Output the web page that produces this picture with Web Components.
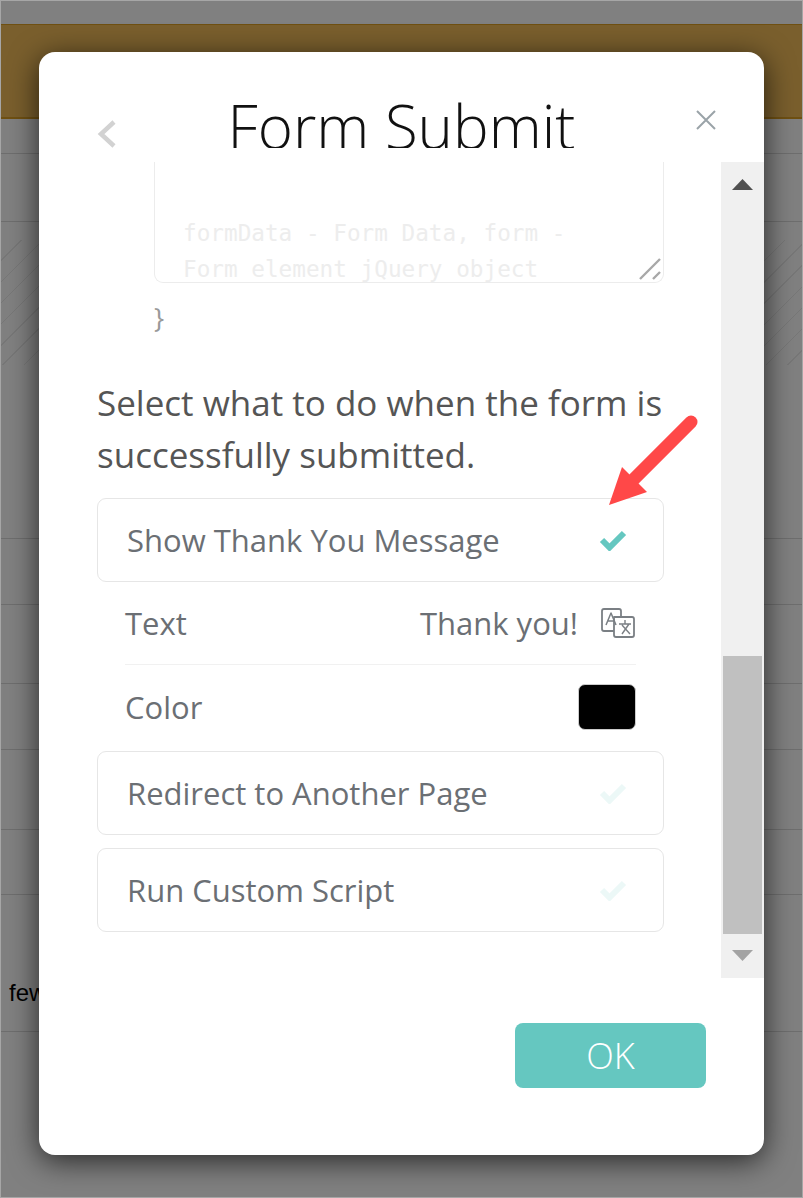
<!DOCTYPE html>
<html>
<head>
<meta charset="utf-8">
<title>Form Submit</title>
<style>
    html, body { margin: 0; padding: 0; height: 100%; overflow: hidden; background: #808080; }
    body { font-family: "Open Sans", "Liberation Sans", sans-serif; }
</style>
</head>
<body>
<page-backdrop></page-backdrop>
<form-modal heading="Form Submit">
    <code-box></code-box>
    <p-title>Select what to do when the form is successfully submitted.</p-title>
    <option-row active>Show Thank You Message</option-row>
    <setting-row label="Text" divider>
        Thank you!
        <translate-icon></translate-icon>
    </setting-row>
    <setting-row label="Color"><color-swatch></color-swatch></setting-row>
    <option-row style="margin-top: 3px">Redirect to Another Page</option-row>
    <option-row style="margin-top: 13px">Run Custom Script</option-row>
</form-modal>
<red-arrow></red-arrow>

<script>
function define(name, html, cls) {
    customElements.define(name, class extends (cls || HTMLElement) {
        constructor() {
            super();
            const template = document.createElement('template');
            template.innerHTML = typeof html === 'function' ? html(this) : html;
            this.attachShadow({ mode: 'open' }).appendChild(template.content.cloneNode(true));
        }
    });
}

// dimmed page behind the dialog
define('page-backdrop', `
    <style>
        :host { display: block; box-sizing: border-box; height: 1198px; border: 1px solid #a6a6a6; background: #808080; overflow: hidden; }
        .top { height: 23px; }
        .banner { height: 92px; background: #7a5f2d; border-top: 1px solid #6f5012; border-bottom: 2px solid #6f5012; }
        .row { border-bottom: 1px solid #6e6e6e; box-sizing: border-box; }
        .hatch {
            height: 125px; margin-top: 18px;
            background: repeating-linear-gradient(135deg, #808080 0 14px, #777 14px 15px);
        }
        .few { display: flex; align-items: center; padding-left: 8px; font: 24px "Liberation Sans", Arial, sans-serif; color: #000; }
    </style>
    <div class="top"></div>
    <div class="banner"></div>
    <div class="row" style="height: 35px"></div>
    <div class="row" style="height: 68px"></div>
    <div class="hatch"></div>
    <div class="row" style="height: 174px"></div>
    <div class="row" style="height: 66px"></div>
    <div class="row" style="height: 79px"></div>
    <div class="row" style="height: 66px"></div>
    <div class="row" style="height: 80px"></div>
    <div class="row" style="height: 65px"></div>
    <div class="row few" style="height: 137px; padding-top: 60px">few</div>
`);

define('form-modal', el => `
    <style>
        :host {
            position: absolute; left: 39px; top: 52px; width: 725px; height: 1103px;
            display: flex; flex-direction: column; background: #fff; border-radius: 16px;
            box-shadow: 0 6px 30px rgba(0, 0, 0, .7);
        }
        header { position: relative; height: 110px; flex: none; }
        h1 {
            margin: 0; position: absolute; left: 0; right: 0; top: 32px; text-align: center;
            font: 300 60px/84px "Open Sans", sans-serif; color: #111; height: 64px; overflow: hidden;
        }
        .back { position: absolute; left: 58px; top: 67px; }
        .close { position: absolute; left: 656px; top: 57px; }
        .body { display: flex; height: 816px; flex: none; }
        .content { flex: 1; overflow: hidden; padding-left: 58px; padding-right: 57px; }
        footer { flex: 1; display: flex; justify-content: flex-end; align-items: flex-start; padding: 45px 58px 0 0; }
    </style>
    <header>
        <h1>${el.getAttribute('heading')}</h1>
        <svg class="back" width="20" height="30" viewBox="0 0 20 30"><path d="M17 3 L4 15 L17 27" fill="none" stroke="#d2d2d2" stroke-width="4.5"/></svg>
        <svg class="close" width="22" height="22" viewBox="0 0 22 22"><path d="M2 2 L20 20 M20 2 L2 20" fill="none" stroke="#9aa3a8" stroke-width="2"/></svg>
    </header>
    <div class="body">
        <div class="content"><slot></slot></div>
        <scroll-bar></scroll-bar>
    </div>
    <footer><ok-button>OK</ok-button></footer>
`);

define('code-box', `
    <style>
        :host { display: block; margin-left: 57px; }
        .box {
            box-sizing: border-box; height: 121px; overflow: hidden; border: 1px solid #ececec; border-top: 0;
            border-radius: 0 0 9px 9px; position: relative; padding-left: 28px;
            font: 22.7px/36px "DejaVu Sans Mono", monospace; color: #ededed; white-space: pre;
        }
        .text { margin-top: -19px; }
        svg { position: absolute; right: 1px; bottom: 1px; }
        .brace { margin-top: 17px; font: 27px/36px "Open Sans", sans-serif; color: #999; }
    </style>
    <div class="box">
        <div class="text">formData - Form Data, form -
Form element jQuery object</div>
        <svg width="24" height="24" viewBox="0 0 24 24"><path d="M2 22 L22 2 M15 22 L22 15" fill="none" stroke="#a8a8a8" stroke-width="2.4"/></svg>
    </div>
    <div class="brace">}</div>
`);

define('p-title', `
    <style>
        :host { display: block; margin: 41px 0 17px; font: 35px/52px "Open Sans", sans-serif; color: #555; }
    </style>
    <slot></slot>
`);

define('check-mark', `
    <style>
        :host { display: block; width: 28px; height: 22px; }
        svg { display: block; }
    </style>
    <svg width="28" height="22" viewBox="0 0 28 22"><path d="M3 11 L10.500 18.500 L25 4" fill="none" stroke="currentColor" stroke-width="6"/></svg>
`);

define('option-row', el => `
    <style>
        :host {
            display: flex; align-items: center; justify-content: space-between; box-sizing: border-box; height: 84px;
            padding: 0 36px 0 29px; border: 1px solid #e6e6e6; border-radius: 9px;
            font: 31px/42px "Open Sans", sans-serif; color: #6b6f74;
        }
        .on { color: #65c7c0; }
        .off { color: #ecf8f7; }
    </style>
    <slot></slot>
    <check-mark class="${el.hasAttribute('active') ? 'on' : 'off'}"></check-mark>
`);

define('setting-row', el => `
    <style>
        :host { display: block; padding: 0 28px 0 28px; }
        .row {
            display: flex; align-items: center; justify-content: space-between; box-sizing: border-box; height: 83px;
            font: 31px/42px "Open Sans", sans-serif; color: #6b6f74;
            ${el.hasAttribute('divider') ? 'border-bottom: 1px solid #f1f1f1;' : ''}
        }
        .val { display: flex; align-items: center; gap: 22px; }
    </style>
    <div class="row"><span>${el.getAttribute('label')}</span><span class="val"><slot></slot></span></div>
`);

define('translate-icon', `
    <style>
        :host { display: block; width: 36px; height: 32px; }
        svg { display: block; }
        text { font-family: "Open Sans", sans-serif; fill: #6b6f74; }
    </style>
    <svg width="36" height="32" viewBox="0 0 36 32" fill="none" stroke="#7a7f84" stroke-width="1.8" stroke-linejoin="round">
        <path d="M14 24 H4 Q2 24 2 22 V4 Q2 2 4 2 H19 Q21 2 21 4 V9"/>
        <path d="M14 10 H32 Q34 10 34 12 V28 Q34 30 32 30 H16 Q14 30 14 28 Z"/>
        <path d="M6 18 L11 6 L16 18 M8 14 H14" stroke-width="1.5"/>
        <path d="M19 17 H31 M25 13 V17 M22 27 L29 17 M22 18 L30 27" stroke-width="1.4"/>
    </svg>
`);

define('color-swatch', `
    <style>
        :host { display: block; box-sizing: border-box; width: 58px; height: 46px; background: #000; border: 1px solid #ccc; border-radius: 7px; }
    </style>
`);

define('scroll-bar', `
    <style>
        :host { display: flex; flex-direction: column; width: 43px; flex: none; background: #f0f0f0; box-sizing: border-box; padding: 0 2px; }
        .btn { display: flex; justify-content: center; flex: none; }
        .up { height: 494px; padding-top: 17px; box-sizing: border-box; }
        .thumb { height: 278px; background: #c0c0c0; }
        .down { padding-top: 16px; }
        svg { display: block; }
    </style>
    <div class="btn up"><svg width="21" height="11"><path d="M10.500 0 L21 11 H0 Z" fill="#505050"/></svg></div>
    <div class="thumb"></div>
    <div class="btn down"><svg width="21" height="11"><path d="M0 0 H21 L10.500 11 Z" fill="#a3a3a3"/></svg></div>
`);

define('ok-button', `
    <style>
        :host {
            display: flex; align-items: center; justify-content: center; width: 191px; height: 65px;
            background: #65c7c0; border-radius: 8px; color: #fff; font: 300 36px/1 "Open Sans", sans-serif;
        }
    </style>
    <slot></slot>
`);

// annotation drawn on top of the screenshot
define('red-arrow', `
    <style>
        :host { position: absolute; left: 600px; top: 410px; width: 110px; height: 105px; }
        svg { display: block; }
    </style>
    <svg width="110" height="105" viewBox="600 410 110 105">
        <path d="M691 422 L630 483" stroke="#ff4848" stroke-width="13" stroke-linecap="round" fill="none"/>
        <path d="M609 505 L622 467 L647 492 Z" fill="#ff4848"/>
    </svg>
`);
</script>
</body>
</html>
